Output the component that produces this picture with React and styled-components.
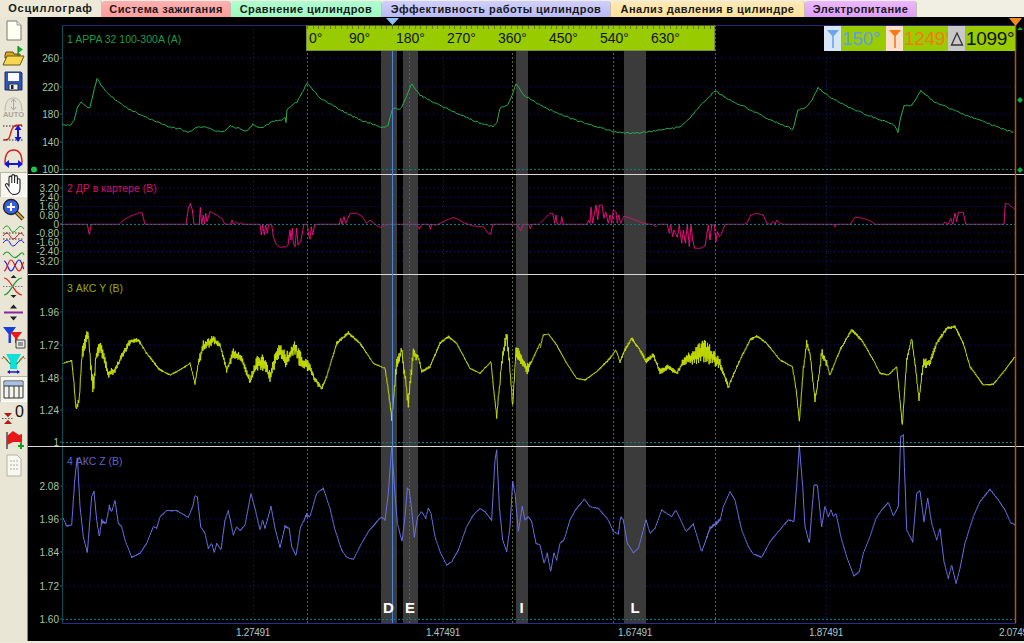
import React from "react";
import styled, { createGlobalStyle } from "styled-components";

const Global = createGlobalStyle`
  html, body { margin: 0; padding: 0; background: #ece9d8; overflow: hidden; }
  * { box-sizing: border-box; }
`;

const Window = styled.div`
  width: 1024px; height: 643px; display: flex; flex-direction: column;
  overflow: hidden; background: #ece9d8; font-family: "Liberation Sans", Arial, sans-serif;
`;
const TabBar = styled.div`
  display: flex; height: 17px; flex: none; background: #f1efe4; padding-top: 0;
`;
const Tab = styled.div`
  width: ${p => p.$w}px; height: 17px; display: flex; align-items: center; justify-content: center;
  font-size: 11px; font-weight: bold; letter-spacing: ${p => p.$sp || 0.45}px; color: #1a1a1a; white-space: nowrap;
  background: ${p => p.$bg}; border-radius: 3px 3px 0 0;
  border-right: 1px solid #c4c0ac; padding-bottom: ${p => (p.$active ? 1 : 2)}px;
  margin-top: ${p => (p.$active ? 0 : 1)}px;
`;
const Body = styled.div`
  flex: 1; display: flex; min-height: 0; padding-bottom: 2px;
`;
const Sidebar = styled.div`
  width: 28px; flex: none; display: flex; flex-direction: column; padding-top: 1px;
  background: #e9e6d6; border-right: 1px solid #8a8878;
`;
const ToolBtn = styled.div`
  width: 27px; height: 25.6px; flex: none; display: flex; align-items: center; justify-content: center;
  background: ${p => (p.$active ? "#f6f5ee" : "transparent")};
  box-shadow: ${p => (p.$active ? "inset 1px 1px 0 #b8b6a6, inset -1px -1px 0 #fff" : "none")};
`;
const Chart = styled.div`
  flex: 1; position: relative; background: #000; overflow: hidden;
`;
const Plot = styled.svg`
  display: block; width: 996px; height: 624px;
  text { font-family: "Liberation Sans", Arial, sans-serif; }
`;
const Ruler = styled.div`
  position: absolute; left: 278px; top: 8px; width: 409px; height: 26px; display: flex; align-items: flex-end;
  padding-bottom: 4px; color: #111; font-size: 14px; line-height: 16px;
  background-color: #99cc00;
  background-image: repeating-linear-gradient(90deg, #6f7f20 0 1px, transparent 1px 5.67px);
  background-size: 100% 3px; background-repeat: no-repeat;
  border: 1px solid #7c8a4a; border-top-color: #4b5a30;
`;
const RulerMark = styled.span`
  flex: none; width: ${p => (p.$first ? 27 : 51)}px; text-align: ${p => (p.$first ? "left" : "center")};
  padding-left: ${p => (p.$first ? 2 : 0)}px; white-space: nowrap;
`;
const Readout = styled.div`
  position: absolute; left: 796px; top: 9px; width: 192px; height: 25px; display: flex;
`;
const ReadIcon = styled.div`
  flex: none; width: 17px; background: ${p => p.$bg}; display: flex; align-items: center; justify-content: center;
`;
const ReadValue = styled.div`
  flex: none; width: ${p => p.$w}px; background: #99cc00; color: ${p => p.$c}; font-size: 19px; line-height: 25px;
  overflow: hidden; white-space: nowrap; padding-left: 1px; letter-spacing: -0.3px;
`;

function rng(seed) {
  let s = seed;
  return () => { s = (s * 1664525 + 1013904223) >>> 0; return s / 4294967296; };
}
function trace(pts, ox, oy, seed, gain = 1, base = 0) {
  const r = rng(seed);
  let flip = 1;
  const out = [];
  for (let i = 0; i < pts.length - 1; i++) {
    const [x0, y0, n0 = 0] = pts[i];
    const [x1, y1, n1 = 0] = pts[i + 1];
    const steps = Math.max(1, Math.round((x1 - x0) / 1.6));
    for (let k = 0; k < steps; k++) {
      const t = k / steps;
      const n = (n0 + (n1 - n0) * t) * gain + base;
      flip = -flip;
      const j = flip * n * (0.2 + 0.8 * r());
      out.push(`${(ox + (x0 + (x1 - x0) * t) / 3).toFixed(1)},${(oy + (y0 + (y1 - y0) * t + j) / 3).toFixed(1)}`);
    }
  }
  const l = pts[pts.length - 1];
  out.push(`${(ox + l[0] / 3).toFixed(1)},${(oy + l[1] / 3).toFixed(1)}`);
  return out.join(" ");
}

const g1 = [[62,124],[66,125],[71,125],[74,121],[77,108],[81,102],[85,105],[88,108],[90,107],[93,95],[97,78],[101,85],[107,93],[117,101],[127,108],[137,113],[147,118],[158,122],[170,127],[180,129],[187,132],[192,131],[197,127],[205,127],[213,130],[223,132],[230,126],[238,128],[247,131],[253,124],[258,127],[263,128],[273,121],[283,120],[285,117],[286,123],[287,110],[292,105],[297,102],[302,93],[307,83],[313,90],[320,98],[337,108],[350,115],[360,120],[375,125],[385,128],[388,125],[392,110],[394,108],[400,110],[405,100],[408,92],[412,84],[420,95],[435,103],[450,110],[465,117],[480,123],[493,127],[497,122],[500,108],[508,105],[512,95],[516,84],[524,95],[545,108],[570,118],[590,125],[605,129],[615,132],[628,133],[640,133],[660,130],[680,127],[688,120],[695,112],[705,101],[715,91],[730,100],[755,112],[775,122],[793,129],[798,110],[806,108],[812,100],[818,88],[830,97],[850,108],[875,118],[893,124],[898,132],[900,120],[904,106],[912,105],[921,91],[935,102],[960,113],[985,122],[1000,128],[1015,133]];

const m1 = [[0,133],[82,133],[88,163],[94,133],[178,133],[190,120],[215,107],[240,98],[246,98],[255,133],[378,133],[385,85],[391,70],[397,90],[402,133],[418,133],[421,82],[425,133],[430,105],[433,133],[437,100],[441,125],[450,95],[470,105],[485,115],[495,133],[512,133],[516,120],[520,133],[528,125],[535,133],[545,128],[550,133],[600,133],[604,165],[608,135],[613,165],[617,135],[622,160],[626,133],[635,133],[640,170],[648,192],[660,202],[680,200],[684,195],[690,150],[693,180],[697,145],[700,190],[705,200],[710,145],[714,195],[722,185],[732,133],[742,133],[746,165],[750,178],[754,140],[758,165],[764,135],[770,133],[838,133],[842,115],[846,133],[852,110],[857,130],[870,100],[890,100],[905,108],[920,130],[930,120],[945,133],[960,142],[975,135],[985,133],[1070,133],[1078,148],[1085,133],[1107,133],[1111,148],[1115,133],[1130,135],[1160,120],[1180,113],[1195,118],[1210,128],[1240,138],[1270,140],[1285,160],[1292,163],[1298,133],[1370,133],[1382,152],[1390,133],[1407,133],[1411,146],[1416,133],[1440,133]];
const m2 = [[0,130],[30,100],[38,100],[44,130],[48,105],[52,133],[62,133],[65,110],[70,133],[140,133],[146,120],[150,130],[153,82],[158,130],[168,75],[173,120],[178,75],[186,75],[192,115],[197,95],[205,130],[210,105],[215,130],[220,90],[228,95],[232,130],[236,105],[242,130],[252,108],[285,120],[318,132],[335,133],[348,140],[355,133],[382,133],[388,160],[392,135],[398,170],[402,150],[412,172],[418,135],[425,190],[430,150],[436,190],[442,135],[448,200],[453,135],[458,180],[464,205],[480,205],[495,198],[505,135],[510,180],[515,135],[523,135],[528,185],[532,155],[538,170],[545,160],[555,133],[612,133],[622,128],[632,105],[650,100],[670,105],[680,130],[690,133],[700,125],[705,133],[710,120],[720,130],[730,133],[880,133],[885,142],[890,133],[930,133],[945,112],[965,114],[990,122],[1005,133],[1210,133],[1215,126],[1225,133],[1232,115],[1238,133],[1245,100],[1250,125],[1255,97],[1270,97],[1277,133],[1392,133],[1396,70],[1405,72],[1425,88]];

const y1 = [[10,130,1],[35,122,1],[42,190,3],[48,270,6],[58,240,6],[66,100,14],[85,40,14],[92,140,14],[100,200,20],[108,110,12],[120,75,12],[130,110,10],[145,160,10],[165,150,6],[185,110,6],[210,65,6],[235,60,3],[260,100,2],[300,150,2],[330,165,1],[360,150,1],[390,130,1],[405,190,2],[415,130,8],[430,80,12],[460,60,10],[480,75,3],[500,150,6],[520,100,10],[545,115,8],[570,185,8],[590,130,14],[610,130,18],[630,170,10],[655,90,18],[680,120,18],[705,80,16],[725,130,18],[750,140,10],[765,180,6],[785,205,4],[800,170,2],[830,70,3],[865,38,3],[900,70,2],[940,130,1],[975,145,1],[985,210,4],[995,295,6],[1010,130,14],[1025,90,14],[1035,170,14],[1045,250,10],[1060,100,14],[1075,110,6],[1085,155,2],[1110,140,2],[1140,70,2],[1165,50,2],[1190,70,1],[1230,145,1],[1260,160,1],[1293,125,1],[1300,200,2],[1310,290,4],[1325,130,12],[1340,40,14],[1350,150,12],[1358,260,4],[1368,90,12],[1400,150,12],[1415,125,3],[1440,70,1]];
const y2 = [[0,85,1],[10,45,1],[25,42,1],[50,75,1],[80,130,1],[110,175,1],[135,180,1],[170,155,1],[210,115,2],[228,90,1],[240,125,2],[255,90,3],[275,55,3],[300,90,3],[318,125,6],[340,105,4],[360,155,5],[385,140,5],[410,160,3],[430,125,8],[460,110,16],[490,90,24],[515,110,20],[540,130,12],[565,200,4],[600,120,2],[630,60,2],[650,48,2],[680,70,1],[720,120,1],[757,140,1],[770,220,5],[778,305,3],[790,150,8],[800,70,6],[810,100,4],[825,240,6],[835,180,6],[845,100,12],[860,130,8],[870,165,2],[900,90,3],[935,30,3],[965,60,2],[1000,120,1],[1020,160,1],[1045,165,1],[1070,140,1],[1078,220,4],[1087,315,4],[1100,120,6],[1115,55,5],[1125,130,6],[1137,240,6],[1150,130,10],[1170,130,8],[1190,70,4],[1220,25,3],[1245,20,2],[1270,70,2],[1290,140,2],[1330,195,1],[1360,193,1],[1395,150,1],[1425,110,1]];

const b1 = [[10,595,1],[20,618,2],[35,615,1],[45,470,2],[52,410,2],[60,560,2],[70,650,1],[82,698,1],[95,530,1],[102,515,1],[110,600,1],[118,650,3],[125,605,4],[138,610,1],[148,560,3],[155,575,1],[165,542,1],[175,610,1],[185,620,1],[195,660,1],[215,712,1],[240,700,1],[260,670,1],[280,620,1],[290,625,1],[300,590,1],[320,572,1],[350,572,1],[385,592,1],[398,560,1],[405,527,1],[412,530,1],[422,620,1],[435,640,1],[445,685,1],[455,670,1],[463,698,1],[470,670,1],[483,690,1],[495,600,1],[505,572,1],[520,645,1],[530,620,1],[540,632,1],[555,615,1],[573,520,1],[585,565,1],[600,630,1],[608,600,1],[615,625,1],[633,560,1],[645,625,1],[660,682,1],[675,620,2],[688,625,1],[695,680,1],[708,708,2],[722,620,2],[740,585,3],[750,590,1],[770,520,1],[790,505,1],[810,565,1],[825,630,1],[845,690,1],[860,712,1],[880,718,1],[905,670,1],[925,635,1],[955,600,1],[965,590,1],[975,600,1],[985,520,1],[995,380,1],[1005,520,1],[1012,610,1],[1026,665,1],[1035,590,1],[1042,505,1],[1048,510,1],[1055,570,1],[1063,650,1],[1073,590,1],[1085,575,1],[1097,595,1],[1105,565,1],[1113,580,1],[1125,650,1],[1140,695,1],[1160,735,1],[1175,725,1],[1195,690,1],[1220,620,1],[1240,585,1],[1260,565,1],[1275,575,1],[1295,600,1],[1305,420,1],[1310,390,1],[1318,560,1],[1328,660,1],[1340,695,1],[1350,620,1],[1358,485,1],[1365,520,1],[1375,635,1],[1387,560,1],[1395,600,1],[1405,590,1],[1415,605,1],[1428,670,1],[1440,675,1]];
const b2 = [[0,675,1],[12,730,1],[22,700,1],[32,755,1],[42,700,1],[50,720,1],[60,670,1],[72,660,1],[90,600,1],[105,572,1],[133,537,1],[150,560,1],[175,565,1],[205,600,1],[220,635,1],[235,642,1],[242,590,1],[250,600,1],[262,670,1],[280,698,1],[295,685,1],[318,600,1],[330,640,1],[345,625,1],[365,570,1],[395,590,1],[407,570,1],[420,595,1],[438,635,1],[460,612,1],[485,695,1],[510,625,3],[540,600,3],[550,560,1],[570,515,1],[585,540,1],[605,630,1],[625,680,1],[640,702,1],[665,712,1],[690,665,1],[715,635,1],[745,600,1],[762,605,1],[770,500,1],[778,375,1],[788,500,1],[795,620,1],[808,670,1],[822,495,1],[832,495,1],[845,620,1],[855,558,1],[865,590,1],[873,570,1],[880,590,1],[888,580,1],[905,660,1],[920,710,1],[942,768,1],[958,755,1],[970,700,1],[990,650,1],[1008,595,1],[1025,570,1],[1045,547,1],[1060,588,1],[1075,560,1],[1082,350,1],[1090,345,1],[1100,630,1],[1118,665,1],[1130,520,1],[1140,512,1],[1152,605,1],[1163,535,1],[1175,610,1],[1190,660,1],[1200,625,1],[1212,725,1],[1225,775,1],[1235,735,1],[1248,790,1],[1260,745,1],[1275,670,1],[1300,590,1],[1320,545,1],[1350,508,1],[1375,540,1],[1395,570,1],[1412,608,1],[1425,615,1]];

const greenJ = (() => {
  const r = rng(7); const o = [];
  for (let i = 0; i < g1.length - 1; i++) {
    const [a, b] = g1[i]; const [c, d] = g1[i + 1];
    const n = Math.max(1, Math.round((c - a) / 1.5));
    for (let k = 0; k < n; k++) {
      const t = k / n;
      o.push(`${(a + (c - a) * t).toFixed(1)},${(b + (d - b) * t + (r() - 0.5) * 1.5).toFixed(1)}`);
    }
  }
  return o.join(" ");
})();

const axes = [
  { lines: [[58, "260"], [87, "220"], [114, "180"], [142, "140"], [169.5, "100"]] },
  { lines: [[188, "3.20"], [197, "2.40"], [206.5, "1.60"], [215, "0.80"], [224, "0"], [233, "-0.80"], [242, "-1.60"], [251.5, "-2.40"], [261, "-3.20"]] },
  { lines: [[312, "1.96"], [345, "1.72"], [378, "1.48"], [410, "1.24"], [442, "1"]] },
  { lines: [[486, "2.08"], [519, "1.96"], [552, "1.84"], [586, "1.72"], [619, "1.60"]] },
];
const zeroLines = [169.5, 224.5, 442.5, 619.5];
const separators = [174.5, 274.5, 446.5];
const bands = [[381, 16], [403, 15], [516, 12], [624, 22]];
const olive = [307.5, 409.5, 512.5, 613.5, 715.5];
const vgrid = [253.5, 443.5, 635.5, 826.5];
const xLabels = [[253, "1.27491"], [443, "1.47491"], [635, "1.67491"], [826, "1.87491"], [1016, "2.07491"]];
const letters = [[388.5, "D"], [410, "E"], [521.5, "I"], [635, "L"]];
const titles = [
  [43, "1 APPA 32 100-300A (A)", "#1f9a48"],
  [192, "2 ДР в картере (В)", "#d01070"],
  [292, "3 АКС Y (В)", "#98a810"],
  [465, "4 АКС Z (В)", "#6060cc"],
];

const Funnel = ({ c }) => (
  <svg width="14" height="23" viewBox="0 0 14 23">
    <path d="M1 3h12L7.8 9v12H6.2V9z" fill={c} />
  </svg>
);

const S = ({ children }) => (
  <svg width="25" height="25" viewBox="0 0 25 25" fill="none">{children}</svg>
);
const icons = [
  <S><path d="M6 3h10l4 4v15H6z" fill="#fffff2" stroke="#77786e" /><path d="M16 3v4h4" fill="#eee" stroke="#999" /></S>,
  <S><path d="M4 11l1-3h7l1 2h6v4H4z" fill="#d9a820" stroke="#5b4a10" /><path d="M2 21l4-9h17l-4 9z" fill="#f5d850" stroke="#6a5410" /><path d="M17 2l5 3.5-5 3.5z" fill="#10b020" /><path d="M17 2v10" stroke="#107020" /></S>,
  <S><path d="M4 3h16l1 1v17H4z" fill="#2f55b5" stroke="#1c2f70" /><path d="M7 4h11v8H7z" fill="#fbfbff" /><path d="M8 15h9v6H8z" fill="#f0f0f0" stroke="#333" /><path d="M10 16h2.5v4H10z" fill="#222" /></S>,
  <S><path d="M4 16C4 6 8 3 12.5 3S21 6 21 16" stroke="#b8b6aa" fill="#e4e2d4" /><path d="M12.5 5v9M10 7l2.5-3 2.5 3M10 12l2.5 3 2.5-3" stroke="#aaa89a" /><text x="12.5" y="22" fontSize="7.5" fontWeight="bold" fill="#a6a498" textAnchor="middle" fontFamily="Liberation Sans">AUTO</text></S>,
  <S><path d="M3 19c5 0 5-1 7-8s4-7 11-7" stroke="#e01818" strokeWidth="1.4" /><path d="M2 5h21M2 19h21" stroke="#222" strokeDasharray="1.5 1.5" /><path d="M17 7v11" stroke="#1414d8" strokeWidth="2" /><path d="M13.5 9L17 4l3.5 5zM13.5 16l3.5 5 3.5-5z" fill="#1414d8" /></S>,
  <S><path d="M4 17C4 7 8 4 12.5 4S21 7 21 17" stroke="#e01818" strokeWidth="1.4" /><path d="M6 18h13" stroke="#1414d8" strokeWidth="2" /><path d="M8 14l-5 4 5 4zM17 14l5 4-5 4z" fill="#1414d8" /></S>,
  <S><path d="M8 14V5.5a1.4 1.4 0 0 1 2.8 0V11V4a1.4 1.4 0 0 1 2.8 0v7V5a1.4 1.4 0 0 1 2.8 0v7V8a1.3 1.3 0 0 1 2.6 0v8c0 4-2 6.5-5.5 6.5S9 21 7.5 18L4.5 13.5c-.7-1.4 1.3-2.5 2.2-1.2z" fill="#fff" stroke="#222" strokeWidth="1.1" /></S>,
  <S><path d="M15 15l7 7" stroke="#333" strokeWidth="4" /><path d="M15 15l7 7" stroke="#d8a820" strokeWidth="2" /><circle cx="10" cy="10" r="7.5" fill="#3860e0" stroke="#222" strokeWidth="1.3" /><path d="M10 6v8M6 10h8" stroke="#fff" strokeWidth="2" /></S>,
  <S><path d="M2 6c3-4 5-4 7 0s4 4 7 0 5-3 7 0" stroke="#18a030" /><path d="M2 13c3-4 5-4 7 0s4 4 7 0 5-3 7 0" stroke="#e01818" /><path d="M2 20c3-4 5-4 7 0s4 4 7 0 5-3 7 0" stroke="#1818e0" /><path d="M2 10h21M2 16h21" stroke="#333" strokeDasharray="1.5 1.5" /></S>,
  <S><path d="M2 6c3-4 5-4 8 0s5 3 8 0 4-3 5 0" stroke="#18a030" strokeWidth="1.1" /><path d="M3 12c3 0 4 10 7 10s5-11 8-11 3 8 5 9" stroke="#1818e0" strokeWidth="1.2" /><path d="M3 22c3 0 4-11 7-11s5 11 8 11 3-8 5-9" stroke="#e01818" strokeWidth="1.2" /></S>,
  <S><path d="M3 4c7 0 10 17 18 17" stroke="#e02020" strokeWidth="1.2" /><path d="M3 21c7 0 10-17 18-17" stroke="#18a030" strokeWidth="1.2" /><path d="M2 12.5h21" stroke="#777" strokeDasharray="1.5 1.5" /><path d="M9.5 4l3-3 3 3zM9.5 21l3 3 3-3z" fill="#222" /></S>,
  <S><path d="M3 12.5h19" stroke="#8a2a9a" strokeWidth="2" /><path d="M9 8.5l3.5-4 3.5 4zM9 16.5l3.500 4 3.500-4z" fill="#222" /></S>,
  <S><path d="M2 2h13l-5 7v9H7.5V9z" fill="#1a3ee0" /><path d="M9 7h12l-4.5 6v5H14v-5z" fill="#e81818" /><path d="M15 15h9v8h-9z" fill="#e8e8e4" stroke="#444" /><path d="M17 18h5M17 20h5" stroke="#444" /></S>,
  <S><path d="M5 3h15l-4 7v8H9v-8z" fill="#10e0d8" /><path d="M1 8c3-5 5 2 8 5M24 8c-3-5-5 2-8 5" stroke="#e03030" /><path d="M2 5c3 3 4 6 8 8M23 5c-3 3-4 6-8 8" stroke="#18a030" /><path d="M7 21h11" stroke="#1414d8" strokeWidth="1.5" /><path d="M9 19l-3 2 3 2zM16 19l3 2-3 2z" fill="#1414d8" /></S>,
  <S><path d="M3 4h19v17H3z" fill="#f4f4ec" stroke="#333" /><path d="M3.5 4.500h18V9h-18z" fill="#a8c0e8" /><path d="M3 9h19M8 9v12M13 9v12M18 9v12" stroke="#333" /></S>,
  <S><path d="M3 11h8l-4 4.200zM3 22h8l-4-4.200z" fill="#b81818" /><path d="M1 16.500h12" stroke="#555" strokeDasharray="1.500 1.500" /><text x="18.500" y="15" fontSize="16" fill="#111" textAnchor="middle" fontFamily="Liberation Sans">0</text></S>,
  <S><path d="M6 4v17" stroke="#333" strokeWidth="1.3" /><path d="M6 8l6-5 6 4 3-1v9l-3-1-6 0-6 3z" fill="#e81818" /><path d="M17 18h6M20 15v6" stroke="#10a020" strokeWidth="2" /></S>,
  <S><path d="M6 2h10l4 4v17H6z" fill="#f8f8f0" stroke="#b4b2a4" /><path d="M9 8h8M9 12h8M9 16h8" stroke="#b0aea0" strokeDasharray="2 1" /></S>,
];

const tabs = [
  ["Осциллограф", 102, "#ece9d8", true, 0.8],
  ["Система зажигания", 129, "linear-gradient(#ffb0b0,#ff9c9c)"],
  ["Сравнение цилиндров", 151, "linear-gradient(#b0ffd0,#a0f8c0)"],
  ["Эффективность работы цилиндров", 229, "linear-gradient(#d0d0ff,#b8b8f8)"],
  ["Анализ давления в цилиндре", 194, "linear-gradient(#ffeab8,#ffe098)"],
  ["Электропитание", 112, "linear-gradient(#ecb8ff,#dc9cf8)"],
];
const marks = ["0°", "90°", "180°", "270°", "360°", "450°", "540°", "630°"];

export default function App() {
  return (
    <Window>
      <Global />
      <TabBar>
        {tabs.map(([t, w, bg, act, sp]) => (
          <Tab key={t} $w={w} $bg={bg} $active={act} $sp={sp}>{t}</Tab>
        ))}
      </TabBar>
      <Body>
        <Sidebar>
          {icons.map((ic, i) => (
            <ToolBtn key={i} $active={i === 6 || i === 14}>{ic}</ToolBtn>
          ))}
        </Sidebar>
        <Chart>
          <Plot viewBox="28 17 996 624">
            {vgrid.map(x => <line key={x} x1={x} x2={x} y1="25" y2="623" stroke="#1a1a66" strokeDasharray="1 3" />)}
            {axes.flatMap(a => a.lines).map(([y, t]) => (
              <g key={t + y}>
                <line x1="62" x2="1015" y1={y} y2={y} stroke="#1a1a66" strokeDasharray="1 3" />
                <line x1="60" x2="62" y1={y} y2={y} stroke="#0f6a6a" />
                <text x="59" y={y + 3.5} fontSize="10" fill="#a6c4a6" textAnchor="end">{t}</text>
              </g>
            ))}
            {bands.map(([x, w]) => <rect key={x} x={x} y="25" width={w} height="598" fill="#3b3b3b" />)}
            {olive.map(x => <line key={x} x1={x} x2={x} y1="25" y2="623" stroke="#66660f" strokeDasharray="2 2" />)}
            <line x1="62.5" x2="62.5" y1="25" y2="623" stroke="#0d4f55" />
            <line x1="62" x2="1016" y1="25.5" y2="25.5" stroke="#2a2478" />
            <line x1="62" x2="1016" y1="623.5" y2="623.5" stroke="#2a2a90" />
            <polyline points={greenJ} fill="none" stroke="#28b050" strokeWidth="1" />
            <polyline points={trace(m1, 60, 180, 11)} fill="none" stroke="#e8107c" strokeWidth="1" />
            <polyline points={trace(m2, 540, 180, 12)} fill="none" stroke="#e8107c" strokeWidth="1" />
            <polyline points={trace(y1, 60, 320, 13, 1.5, 1)} fill="none" stroke="#c4dc00" strokeWidth="1" />
            <polyline points={trace(y2, 540, 320, 14, 1.5, 1)} fill="none" stroke="#c4dc00" strokeWidth="1" />
            <polyline points={trace(b1, 60, 320, 15, 2)} fill="none" stroke="#6c70e4" strokeWidth="1" />
            <polyline points={trace(b2, 540, 320, 16, 2)} fill="none" stroke="#6c70e4" strokeWidth="1" />
            {zeroLines.map(y => <line key={y} x1="62" x2="1015" y1={y} y2={y} stroke="#0f7a7a" strokeDasharray="2 2" />)}
            {separators.map(y => <line key={y} x1="28" x2="1024" y1={y} y2={y} stroke="#d8d8d8" />)}
            <line x1="392.5" x2="392.5" y1="25" y2="623" stroke="#4a84dc" />
            <line x1="1015.5" x2="1015.5" y1="25" y2="623" stroke="#b4560f" strokeWidth="1.5" />
            <path d="M386 18h13l-6.5 7z" fill="#8cc0f8" />
            <path d="M1009 18h13l-6.5 8z" fill="#f08a20" />
            <path d="M1017 30l3-3 3 3z" fill="#10b040" />
            <path d="M1020 97l3 3-3 3-3-3z" fill="#10b040" />
            <path d="M1020 167l3 3-3 3-3-3z" fill="#10b040" />
            <circle cx="34" cy="169.5" r="3" fill="#20c050" />
            {titles.map(([y, t, c]) => <text key={t} x="67" y={y} fontSize="10.5" fill={c}>{t}</text>)}
            {letters.map(([x, t]) => <text key={t} x={x} y="613" fontSize="15" fontWeight="bold" fill="#fff" textAnchor="middle">{t}</text>)}
            {xLabels.map(([x, t]) => <text key={t} x={x} y="636" fontSize="10" letterSpacing="-0.3" fill="#a8c8c8" textAnchor="middle">{t}</text>)}
          </Plot>
          <Ruler>
            {marks.map((m, i) => <RulerMark key={m} $first={i === 0}>{m}</RulerMark>)}
          </Ruler>
          <Readout>
            <ReadIcon $bg="#d8e6fa"><Funnel c="#6ea4ee" /></ReadIcon>
            <ReadValue $w={45} $c="#5f9cea">150°</ReadValue>
            <ReadIcon $bg="#fde0cc"><Funnel c="#f47a18" /></ReadIcon>
            <ReadValue $w={45} $c="#f47a18">1249°</ReadValue>
            <ReadIcon $bg="#c8c8c8">
              <svg width="14" height="16" viewBox="0 0 14 16" fill="none"><path d="M7 2L1.5 14h11z" stroke="#333" strokeWidth="1.3" /></svg>
            </ReadIcon>
            <ReadValue $w={50} $c="#111">1099°</ReadValue>
          </Readout>
        </Chart>
      </Body>
    </Window>
  );
}
